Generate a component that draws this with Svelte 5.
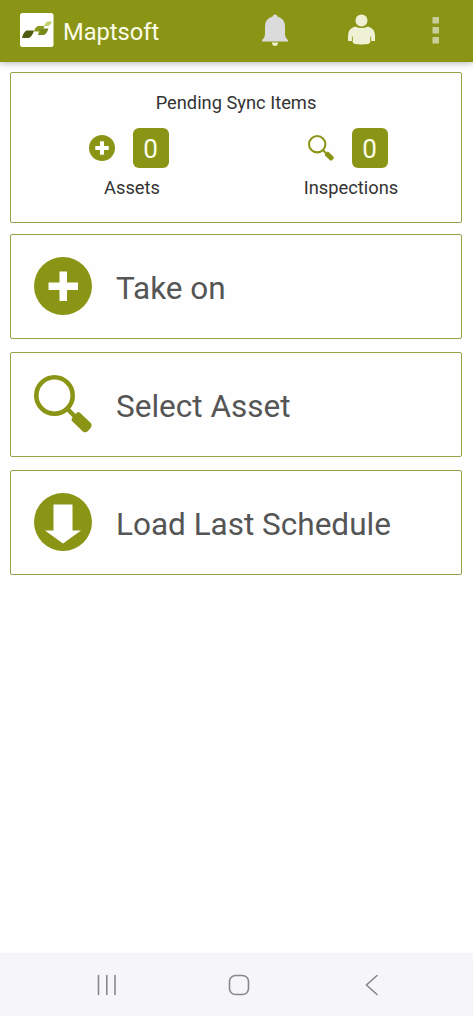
<script>
    let assets = $state(0);
    let inspections = $state(0);

    const actions = [
        { icon: 'plus', label: 'Take on' },
        { icon: 'search', label: 'Select Asset' },
        { icon: 'down', label: 'Load Last Schedule' }
    ];
</script>

{#snippet glyph(name, size)}
    <svg width={size} height={size} viewBox="0 0 58 58" aria-hidden="true">
        {#if name === 'plus'}
            <circle cx="29" cy="29" r="29" fill="#8a9516" />
            <path d="M25.500 14.500h7.500v11h11v7.500h-11v11h-7.500v-11h-11v-7.500h11z" fill="#fff" />
        {:else if name === 'plus-bold'}
            <circle cx="29" cy="29" r="29" fill="#8a9516" />
            <path d="M24.500 14h9v10.500h10.500v9h-10.500v10.500h-9v-10.500h-10.500v-9h10.500z" fill="#fff" />
        {:else if name === 'search'}
            <circle cx="20.500" cy="20.500" r="18.200" fill="none" stroke="#8a9516" stroke-width="4.600" />
            <path d="M33.500 34l9 9" stroke="#8a9516" stroke-width="4.500" />
            <path d="M38 43l5-5.500q1.500-1 3 .3l10.500 10q2 2.200.3 5l-3 3.500q-2.500 2-5 .2L38.500 46.500q-1.500-1.500-.5-3.500z" fill="#8a9516" />
        {:else}
            <circle cx="29" cy="29" r="29" fill="#8a9516" />
            <path d="M19.500 11.500h19v26h8.500l-18 13-18-13h8.500z" fill="#fff" />
        {/if}
    </svg>
{/snippet}

{#snippet counter(icon, count, label)}
    <div class="counter">
        <div class="counter-row">
            {@render glyph(icon, 26)}
            <span class="badge">{count}</span>
        </div>
        <span class="counter-label">{label}</span>
    </div>
{/snippet}

<div class="screen">
    <header>
        <svg class="logo" width="34" height="34" viewBox="0 0 34 34" aria-hidden="true">
            <rect width="33.500" height="34" rx="2.500" fill="#fff" />
            <path d="M6.500 17.500h7.500q-1.500 5.500-5 7.500h-7q1-5.500 4.500-7.500z" fill="#515a12" />
            <path d="M18 13h6.500q-1.500 4.500-4.500 5.500h-6q1-4.500 4-5.500z" fill="#8a9a20" />
            <path d="M22 15.500h6.500q-1.500 5-4.500 6.500h-6q1-5 4-6.500z" fill="#788a1c" />
            <path d="M27.500 8.500h4.500q-1 3.500-3.500 4.500h-4.500q1-3.500 3.500-4.500z" fill="#c5d06c" />
        </svg>
        <h1>Maptsoft</h1>
        <nav>
            <svg width="26" height="34" viewBox="0 0 26 34" aria-label="Notifications">
                <path d="M10.500 2.500q.5-2 2.500-2t2.500 2q7.500 2 7.500 10v7q0 4 3 6.500v1.500H0v-1.500q3-2.500 3-6.500v-7q0-8 7.500-10z" fill="#dadbda" />
                <path d="M9.800 28.500h6.400q-.7 3.500-3.200 3.500t-3.200-3.500z" fill="#edf0cb" />
            </svg>
            <svg width="28" height="34" viewBox="0 0 28 34" aria-label="Profile">
                <circle cx="13.500" cy="6.500" r="6" fill="#eff1d5" />
                <path d="M7 12.500q6.500 3 13 0 7 2.200 7 9v5.500h-4v-5l-.6 6q-.2 2.500-8.900 2.500t-8.900-2.500l-.6-6v5h-4v-5.500q0-6.800 7-9z" fill="#eff1d5" />
                <path d="M4.400 27v-4.500M22.700 27v-4.500" stroke="#8a9516" stroke-width="0.800" />
            </svg>
            <svg width="8" height="34" viewBox="0 0 8 34" aria-label="More">
                <path d="M.5 3h6.500v6.500h-6.500zM.5 13h6.500v6.500h-6.500zM.5 23h6.500v6.500h-6.500z" fill="#c9ce98" />
            </svg>
        </nav>
    </header>

    <main>
        <section class="card summary">
            <h2>Pending Sync Items</h2>
            <div class="counters">
                {@render counter('plus-bold', assets, 'Assets')}
                {@render counter('search', inspections, 'Inspections')}
            </div>
        </section>

        <div class="actions">
            {#each actions as action}
                <button class="card action">
                    {@render glyph(action.icon, 58)}
                    <span>{action.label}</span>
                </button>
            {/each}
        </div>
    </main>

    <footer>
        <svg width="22" height="22" viewBox="0 0 22 22" aria-label="Recents">
            <path d="M2.500 1.500v19M10.800 1.500v19M19 1.500v19" />
        </svg>
        <svg width="22" height="22" viewBox="0 0 22 22" aria-label="Home">
            <rect x="1.500" y="1.500" width="19" height="19" rx="6" />
        </svg>
        <svg width="22" height="22" viewBox="0 0 22 22" aria-label="Back">
            <path d="M17 1.500l-10.500 9.500 10.500 9.500" />
        </svg>
    </footer>
</div>

<style>
    :global(body) {
        margin: 0;
        background: #fefefe;
    }

    .screen {
        display: flex;
        flex-direction: column;
        height: 1016px;
        font-family: Roboto, sans-serif;
        color: #333;
    }

    svg {
        display: block;
        flex: none;
    }

    header {
        display: flex;
        align-items: center;
        box-sizing: border-box;
        height: 62px;
        padding: 0 33px 0 20px;
        background: #8a9516;
        box-shadow: 0 1px 7px rgba(0, 0, 0, 0.3);
    }

    .logo {
        margin-bottom: 2px;
    }

    h1 {
        margin: 0 0 0 9px;
        padding-top: 2px;
        font-size: 23.700px;
        font-weight: 400;
        color: #fbfce8;
    }

    nav {
        display: flex;
        margin-left: auto;
    }

    nav svg:nth-child(2) {
        margin: 0 56px 0 60px;
    }

    main {
        flex: 1;
        padding: 10px 11px 0 10px;
    }

    .card {
        box-sizing: border-box;
        width: 100%;
        border: 1px solid #8fa548;
        border-radius: 2px;
        background: #fefefe;
    }

    .summary {
        height: 151px;
        padding: 19px 6px 0;
    }

    h2 {
        margin: 0;
        font-size: 18.300px;
        font-weight: 400;
        line-height: 22px;
        text-align: center;
    }

    .counters {
        display: flex;
        margin-top: 14px;
        padding-left: 2px;
    }

    .counter {
        flex: 0 0 219px;
        display: flex;
        flex-direction: column;
        align-items: center;
    }

    .counter-row {
        display: flex;
        align-items: center;
        gap: 18px;
    }

    .badge {
        width: 36px;
        height: 40px;
        border-radius: 6px;
        background: #8a9516;
        color: #fbfce8;
        font-size: 26px;
        line-height: 43px;
        text-align: center;
    }

    .counter-label {
        margin-top: 9px;
        padding-left: 7px;
        font-size: 18.300px;
        line-height: 22px;
    }

    .actions {
        display: flex;
        flex-direction: column;
        gap: 13px;
        margin-top: 11px;
    }

    .action {
        display: flex;
        align-items: center;
        gap: 24px;
        height: 105px;
        padding: 0 23px;
        font: 31.500px Roboto, sans-serif;
        color: #555;
    }

    .action svg {
        margin-bottom: 2px;
    }

    .action span {
        padding-top: 3px;
    }

    footer {
        display: flex;
        justify-content: space-between;
        align-items: center;
        box-sizing: border-box;
        height: 63px;
        padding: 0 91px 0 96px;
        background: #f5f5fa;
    }

    footer svg {
        fill: none;
        stroke: #88888c;
        stroke-width: 1.6;
        stroke-linecap: round;
    }
</style>
